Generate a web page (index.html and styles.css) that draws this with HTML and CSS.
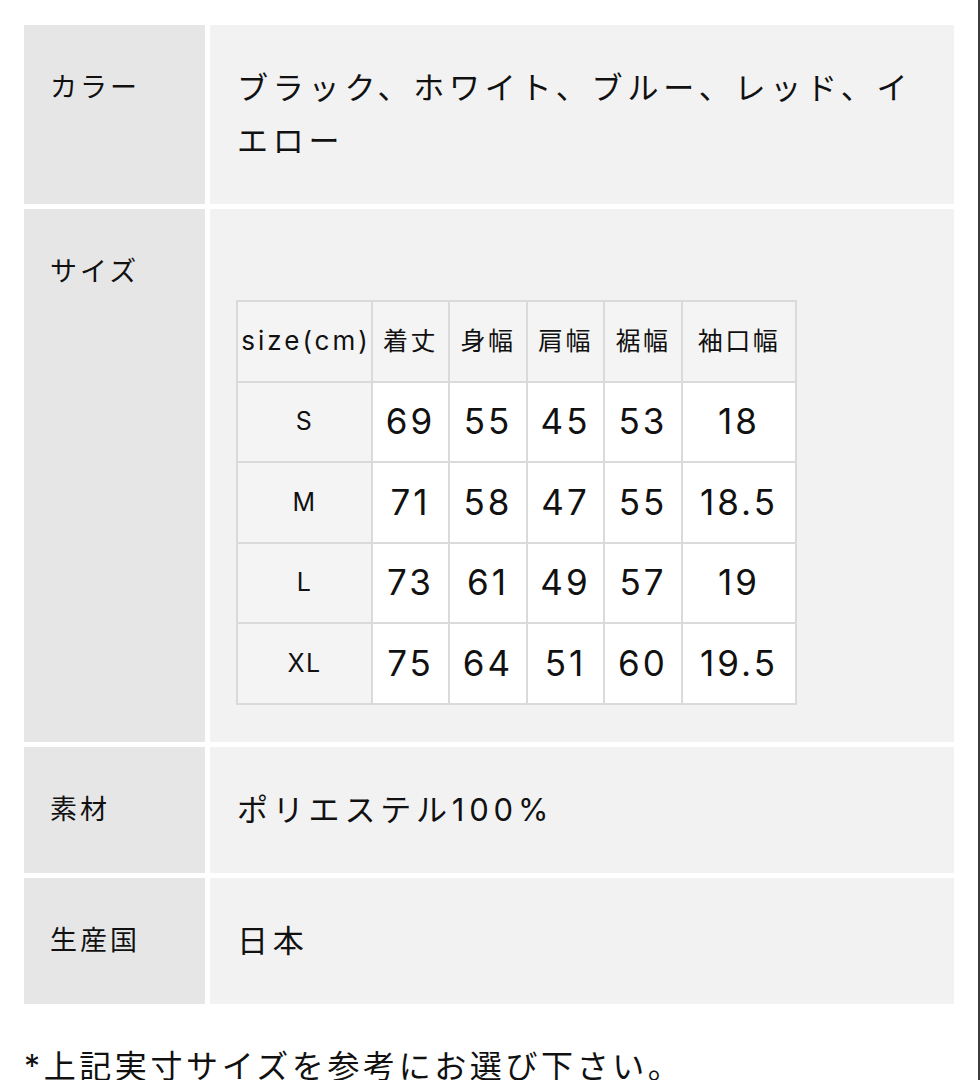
FILE: index.html
```html
<!DOCTYPE html>
<html lang="ja">
<head>
<meta charset="utf-8">
<title>商品詳細</title>
<link rel="stylesheet" href="styles.css">
</head>
<body>
<div class="page">
  <div class="spec">
    <div class="label">カラー</div>
    <div class="value">ブラック、ホワイト、ブルー、レッド、イエロー</div>

    <div class="label">サイズ</div>
    <div class="value">
      <div class="blank"></div>
      <table class="sizes">
        <colgroup>
          <col class="c1"><col class="c2"><col class="c3"><col class="c4"><col class="c5"><col class="c6">
        </colgroup>
        <tr class="head"><td class="unit">size(cm)</td><td>着丈</td><td>身幅</td><td>肩幅</td><td>裾幅</td><td>袖口幅</td></tr>
        <tr><td class="sz">S</td><td>69</td><td>55</td><td>45</td><td>53</td><td>18</td></tr>
        <tr><td class="sz">M</td><td>71</td><td>58</td><td>47</td><td>55</td><td>18.5</td></tr>
        <tr><td class="sz">L</td><td>73</td><td>61</td><td>49</td><td>57</td><td>19</td></tr>
        <tr><td class="sz">XL</td><td>75</td><td>64</td><td>51</td><td>60</td><td>19.5</td></tr>
      </table>
    </div>

    <div class="label">素材</div>
    <div class="value">ポリエステル100%</div>

    <div class="label">生産国</div>
    <div class="value">日本</div>
  </div>
  <p class="note">*上記実寸サイズを参考にお選び下さい。</p>
</div>
</body>
</html>
```

FILE: styles.css
```css
html, body {
  margin: 0;
  padding: 0;
  background: #ffffff;
}
body {
  font-family: "Inter", "Noto Sans CJK JP", "Noto Sans", sans-serif;
  color: #111111;
}
.page {
  width: 980px;
  height: 1080px;
  box-sizing: border-box;
  border-right: 2px solid #3c3c3c;
  padding: 25px 0 0 24px;
  overflow: hidden;
}
.spec {
  width: 930px;
  display: grid;
  grid-template-columns: 181px 1fr;
  gap: 5px;
}
.label {
  background: #e6e6e6;
  padding: 36px 0 37px 26px;
  font-size: 27px;
  letter-spacing: 3px;
  line-height: 53px;
}
.value {
  background: #f2f2f2;
  padding: 36px 24px 37px 27px;
  font-size: 31px;
  letter-spacing: 4.8px;
  line-height: 53px;
}
.blank {
  height: 55px;
}
.sizes {
  border-collapse: collapse;
  table-layout: fixed;
  width: 559px;
  margin-left: -1px;
  letter-spacing: 0;
}
.sizes col.c1 { width: 135px; }
.sizes col.c2 { width: 77px; }
.sizes col.c3 { width: 78px; }
.sizes col.c4 { width: 77px; }
.sizes col.c5 { width: 78px; }
.sizes col.c6 { width: 114px; }
.sizes td {
  border: 2px solid #dadada;
  background: #ffffff;
  height: 78.5px;
  padding: 0;
  text-align: center;
  vertical-align: middle;
  font-size: 35px;
  letter-spacing: 3px;
  line-height: 1;
  white-space: nowrap;
}
.sizes tr.head td {
  background: #f4f4f4;
  font-size: 25px;
  letter-spacing: 2.5px;
}
.sizes tr.head td.unit {
  font-size: 26px;
  letter-spacing: 3px;
  padding-left: 3px;
}
.sizes td.sz {
  background: #f4f4f4;
  font-size: 25px;
  letter-spacing: 1.5px;
}
.note {
  margin: 36px 0 0 0;
  font-size: 32px;
  letter-spacing: 3.6px;
  line-height: 53px;
}
```
